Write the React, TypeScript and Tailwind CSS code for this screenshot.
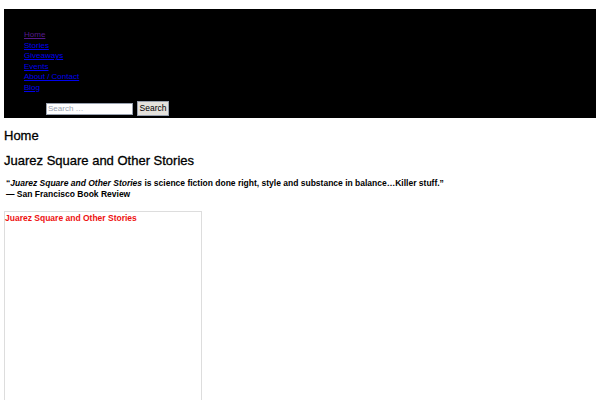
const links = [
  { title: "Home", visited: true },
  { title: "Stories" },
  { title: "Giveaways" },
  { title: "Events" },
  { title: "About / Contact" },
  { title: "Blog" },
];

export default function App() {
  return (
    <div className="min-h-[400px] bg-white px-1 pt-[9px] font-['Liberation_Sans',Arial,sans-serif] text-black">
      <header className="bg-black pb-[2px] pt-[21px]">
        <nav aria-label="Main navigation" className="pl-5">
          <ul className="flex flex-col">
            {links.map((link) => (
              <li key={link.title} className="h-[10.5px] text-[8px] leading-[10.5px]">
                <a
                  href="#"
                  className={`underline ${link.visited ? "text-[#551a8b]" : "text-[#0000ee]"}`}
                >
                  {link.title}
                </a>
              </li>
            ))}
          </ul>
        </nav>
        <form className="mt-[8px] flex items-center gap-1 pl-[42px]">
          <input
            type="search"
            placeholder="Search …"
            className="h-[12px] w-[87px] border border-gray-400 bg-white px-[1px] text-[8px] text-gray-700 placeholder:text-gray-400 outline-none"
          />
          <button
            type="button"
            className="h-[15px] w-[32px] border border-gray-400 bg-[#e5e2dc] text-[8.5px] leading-[13px] text-black"
          >
            Search
          </button>
        </form>
      </header>

      <main className="pt-[10px]">
        <h1 className="text-[13px] leading-[16px] [-webkit-text-stroke:0.3px_black]">Home</h1>
        <h2 className="mt-[9px] text-[13px] leading-[16px] [-webkit-text-stroke:0.3px_black]">
          Juarez Square and Other Stories
        </h2>
        <blockquote className="mt-[9px] pl-[2px] text-[8.5px] font-bold leading-[11px]">
          <p>
            “<em>Juarez Square and Other Stories</em> is science fiction done right, style and
            substance in balance…Killer stuff.”
          </p>
          <p>— San Francisco Book Review</p>
        </blockquote>
        <div className="mt-[11px] h-[200px] w-[198px] border border-[#dddddd]">
          <p className="mt-[1px] text-[8.5px] font-bold leading-[10px] text-[#ee1111]">
            Juarez Square and Other Stories
          </p>
        </div>
      </main>
    </div>
  );
}
